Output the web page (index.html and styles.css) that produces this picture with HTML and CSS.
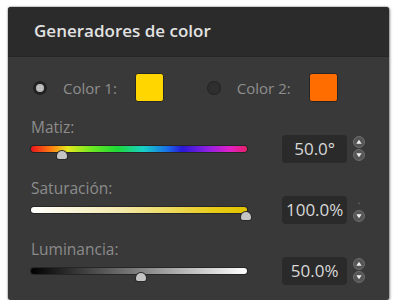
FILE: index.html
```html
<!DOCTYPE html>
<html lang="es">
<head>
<meta charset="UTF-8">
<title>Generadores de color</title>
<link rel="stylesheet" href="styles.css">
</head>
<body>
<div class="panel">
    <div class="panel-head">Generadores de color</div>
    <div class="panel-body">
        <div class="colors">
            <div class="pick">
                <span class="radio on"></span>
                <span class="pick-label">Color 1:</span>
                <span class="swatch yellow"></span>
            </div>
            <div class="pick">
                <span class="radio"></span>
                <span class="pick-label">Color 2:</span>
                <span class="swatch orange"></span>
            </div>
        </div>

        <div class="group">
            <div class="slider-col">
                <div class="label">Matiz:</div>
                <div class="track-wrap">
                    <div class="track hue"></div>
                    <span class="thumb" style="left: 14.3%"></span>
                </div>
            </div>
            <div class="value">50.0°</div>
            <svg class="spin" width="14" height="28" viewBox="0 0 14 28">
                <circle cx="7" cy="7" r="5.5" fill="#555" stroke="#6e6e6e" stroke-width="1"/>
                <path d="M4.3 8.8 L7 4.6 L9.7 8.8 Z" fill="#f0f0f0"/>
                <circle cx="7" cy="20" r="5.5" fill="#555" stroke="#6e6e6e" stroke-width="1"/>
                <path d="M4.3 18.2 L7 22.4 L9.7 18.2 Z" fill="#f0f0f0"/>
            </svg>
        </div>

        <div class="group">
            <div class="slider-col">
                <div class="label">Saturación:</div>
                <div class="track-wrap">
                    <div class="track sat"></div>
                    <span class="thumb" style="left: 99.5%"></span>
                </div>
            </div>
            <div class="value">100.0%</div>
            <svg class="spin" width="14" height="28" viewBox="0 0 14 28">
                <path d="M5.5 8 L7 6 L8.5 8 Z" fill="#5c5c5c"/>
                <circle cx="7" cy="20" r="5.5" fill="#555" stroke="#6e6e6e" stroke-width="1"/>
                <path d="M4.3 18.2 L7 22.4 L9.7 18.2 Z" fill="#f0f0f0"/>
            </svg>
        </div>

        <div class="group">
            <div class="slider-col">
                <div class="label">Luminancia:</div>
                <div class="track-wrap">
                    <div class="track lum"></div>
                    <span class="thumb" style="left: 50.7%"></span>
                </div>
            </div>
            <div class="value">50.0%</div>
            <svg class="spin" width="14" height="28" viewBox="0 0 14 28">
                <circle cx="7" cy="7" r="5.5" fill="#555" stroke="#6e6e6e" stroke-width="1"/>
                <path d="M4.3 8.8 L7 4.6 L9.7 8.8 Z" fill="#f0f0f0"/>
                <circle cx="7" cy="20" r="5.5" fill="#555" stroke="#6e6e6e" stroke-width="1"/>
                <path d="M4.3 18.2 L7 22.4 L9.7 18.2 Z" fill="#f0f0f0"/>
            </svg>
        </div>
    </div>
</div>
</body>
</html>
```

FILE: styles.css
```css
body {
    margin: 0;
    background-color: #fff;
    font-family: "Open Sans", "Noto Sans", sans-serif;
}

.panel {
    margin: 7px 4px 0 8px;
    width: 381px;
    height: 293px;
    background-color: #393939;
    border-radius: 3px;
    box-shadow: 0 0 2px rgba(0, 0, 0, 0.6), 1px 1px 3px rgba(0, 0, 0, 0.35);
    overflow: hidden;
}

.panel-head {
    height: 50px;
    box-sizing: border-box;
    padding: 13px 0 0 26px;
    background-color: #2b2b2b;
    border-bottom: 1px solid #262626;
    color: #e2e2e2;
    font-size: 17px;
    font-weight: 600;
    line-height: 22px;
}

.panel-body {
    padding: 16px 23px 0 23px;
}

/* colour pickers */
.colors {
    display: flex;
    height: 29px;
    padding-left: 2px;
    gap: 43px;
}

.pick {
    display: flex;
    align-items: center;
}

.radio {
    width: 14px;
    height: 14px;
    border-radius: 50%;
    box-sizing: border-box;
    background-color: #2f2f2f;
    box-shadow: inset 0 0 2px rgba(0, 0, 0, 0.6);
}

.radio.on {
    background-color: #bdbdbd;
    border: 3px solid #222;
    box-shadow: none;
}

.pick-label {
    margin: 0 18px 0 16px;
    color: #8e8e8e;
    font-size: 15px;
}

.swatch {
    width: 27px;
    height: 27px;
    border: 1px solid #262626;
    border-radius: 3px;
}

.swatch.yellow { background-color: #ffd600; }
.swatch.orange { background-color: #ff6c00; }

/* slider groups */
.group {
    display: flex;
    align-items: flex-end;
    margin-top: 18px;
}

.slider-col {
    width: 217px;
    margin-right: 35px;
}

.label {
    height: 15px;
    line-height: 15px;
    color: #8c8c8c;
    font-size: 15.5px;
}

.track-wrap {
    position: relative;
    height: 28px;
    display: flex;
    align-items: center;
}

.track {
    width: 100%;
    height: 6px;
    border-radius: 3px;
    box-shadow: 0 0 0 1px #262626;
}

.track.hue {
    background: linear-gradient(to right, #e8141c 0%, #ff7a10 9%, #e6e81e 17%, #6ee820 28%, #1ed838 40%, #18d0c8 52%, #1a70e8 63%, #2a18d8 70%, #9020e0 82%, #e020c8 92%, #e8206a 100%);
}

.track.sat {
    background: linear-gradient(to right, #ffffff 0%, #f4eab0 40%, #e8cc18 85%, #e0c400 100%);
}

.track.lum {
    background: linear-gradient(to right, #000 0%, #5a5a5a 35%, #b4b4b4 70%, #fff 100%);
}

.thumb {
    position: absolute;
    top: 16px;
    width: 10px;
    height: 8px;
    margin-left: -5px;
    background-color: #c4c4c4;
    border-radius: 5px 5px 2px 2px;
    box-shadow: 0 0 0 1px #2a2a2a;
}

.value {
    width: 65px;
    height: 28px;
    line-height: 28px;
    background-color: #2a2a2a;
    border-radius: 4px;
    color: #d8d8d8;
    font-size: 17px;
    text-align: center;
}

.spin {
    display: block;
    margin: 0 0 0 5px;
}
```
